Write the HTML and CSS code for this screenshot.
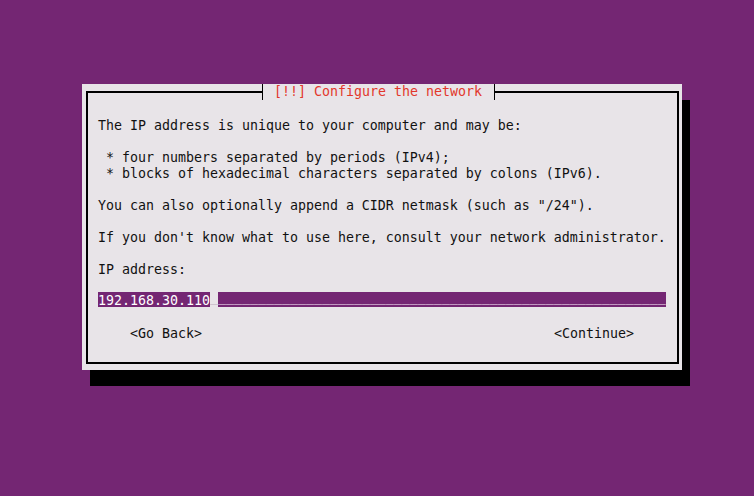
FILE: index.html
```html
<!DOCTYPE html>
<html>
<head>
<meta charset="utf-8">
<link rel="stylesheet" href="styles.css">
</head>
<body>
<div class="screen">
  <div class="dialog">
    <div class="frame">
      <div class="title">[!!] Configure the network</div>
      <div class="line"></div>
      <div class="line">The IP address is unique to your computer and may be:</div>
      <div class="line"></div>
      <div class="line"> * four numbers separated by periods (IPv4);</div>
      <div class="line"> * blocks of hexadecimal characters separated by colons (IPv6).</div>
      <div class="line"></div>
      <div class="line">You can also optionally append a CIDR netmask (such as "/24").</div>
      <div class="line"></div>
      <div class="line">If you don't know what to use here, consult your network administrator.</div>
      <div class="line"></div>
      <div class="line">IP address:</div>
      <div class="line"></div>
      <div class="line field"><span class="value">192.168.30.110</span><span class="cursor">_</span><span class="rest">________________________________________________________</span></div>
      <div class="line"></div>
      <div class="line buttons">
        <span class="btn">&lt;Go Back&gt;</span>
        <span class="btn">&lt;Continue&gt;</span>
      </div>
      <div class="line"></div>
    </div>
  </div>
</div>
</body>
</html>
```
FILE: styles.css
```css
html, body {
  margin: 0;
  padding: 0;
}
body {
  background: #742673;
  width: 754px;
  height: 496px;
  overflow: hidden;
  font-family: "DejaVu Sans Mono", "Liberation Mono", monospace;
  font-size: 13.29px;
  color: #111;
}
.screen {
  padding: 84px 0 0 82px;
}
.dialog {
  width: 600px;
  height: 286px;
  box-sizing: border-box;
  background: #e8e4e8;
  box-shadow: 8px 16px 0 #000;
  padding: 7px 3px 6px 4px;
}
.frame {
  position: relative;
  height: 100%;
  box-sizing: border-box;
  border: 2px solid #000;
  padding: 7px 11px 6px 10px;
}
.title {
  position: absolute;
  top: -9px;
  left: 174px;
  height: 16px;
  line-height: 16px;
  width: 208px;
  padding: 0 12px 0 11px;
  border-left: 1px solid #000;
  border-right: 1px solid #000;
  background: #e8e4e8;
  color: #e2372b;
  white-space: pre;
}
.line {
  height: 16px;
  line-height: 20px;
  white-space: pre;
}
.field {
  display: flex;
  line-height: normal;
}
.value,
.cursor,
.rest {
  display: block;
  height: 15px;
  box-sizing: border-box;
}
.value {
  padding-top: 3px;
  line-height: 12px;
  background: #742673;
  color: #fff;
}
.cursor {
  line-height: 10px;
  background: #e8e4e8;
  color: #bfaebf;
}
.rest {
  flex: 1;
  line-height: 10px;
  background: #742673;
  color: #e8d4e8;
}
.buttons {
  display: flex;
  justify-content: space-between;
  padding: 0 32px;
}
```
